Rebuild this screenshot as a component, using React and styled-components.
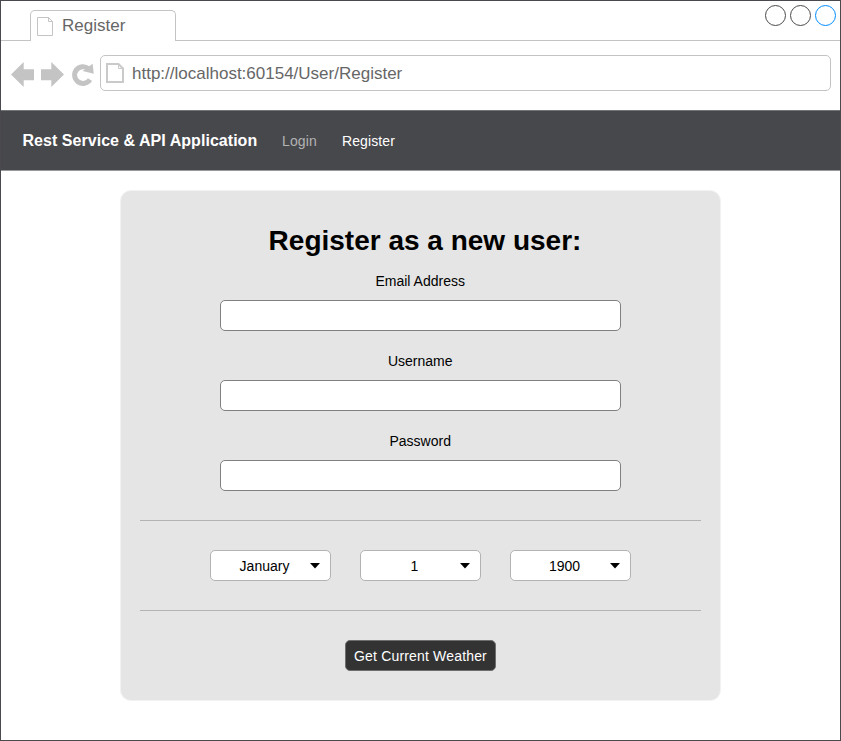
import React from "react";
import styled, { createGlobalStyle } from "styled-components";

const GlobalStyle = createGlobalStyle`
  *, *::before, *::after { box-sizing: border-box; }
  body {
    margin: 0;
    background: #fff;
    font-family: "Liberation Sans", Arial, Helvetica, sans-serif;
  }
`;

const Window = styled.div`
  display: flex;
  flex-direction: column;
  width: 841px;
  height: 741px;
  border: 1px solid #4a4a4e;
  background: #fff;
`;

const TabStrip = styled.div`
  display: flex;
  align-items: flex-end;
  height: 40px;
`;

const TabGap = styled.div`
  width: 29px;
  height: 40px;
  border-bottom: 1px solid #c4c4c4;
`;

const Tab = styled.div`
  display: flex;
  align-items: center;
  gap: 8px;
  width: 146px;
  height: 31px;
  padding: 0 0 0 6px;
  border: 1px solid #c4c4c4;
  border-bottom: none;
  border-radius: 5px 5px 0 0;
`;

const TabTitle = styled.span`
  font-size: 17px;
  line-height: 20px;
  color: #666;
`;

const WindowControls = styled.div`
  display: flex;
  flex: 1;
  justify-content: flex-end;
  height: 40px;
  padding: 4px 4px 0 0;
  gap: 4px;
  border-bottom: 1px solid #c4c4c4;
`;

const ControlDot = styled.span`
  width: 21px;
  height: 21px;
  border: 1px solid ${(p) => (p.$accent ? "#008cff" : "#4a4a4a")};
  border-radius: 50%;
`;

const Toolbar = styled.div`
  display: flex;
  align-items: flex-start;
  height: 69px;
  padding: 14px 9px 0 10px;
`;

const NavIcons = styled.svg`
  flex: none;
  width: 83px;
  height: 36px;
  margin-right: 6px;
`;

const AddressBar = styled.div`
  display: flex;
  flex: 1;
  align-items: center;
  gap: 8px;
  height: 36px;
  padding-left: 5px;
  border: 1px solid #c4c4c4;
  border-radius: 5px;
`;

const Url = styled.span`
  padding-top: 2px;
  font-size: 17px;
  line-height: 20px;
  color: #666;
`;

const Navbar = styled.nav`
  display: flex;
  align-items: center;
  height: 61px;
  padding: 0 0 0 21.5px;
  background: #47484c;
  border-top: 1px solid #737476;
  border-bottom: 1px solid #98989c;
`;

const Brand = styled.span`
  width: 259.5px;
  font-size: 16px;
  font-weight: 700;
  letter-spacing: 0.04px;
  color: #fff;
`;

const NavLink = styled.a`
  margin-right: 25px;
  padding-top: 1px;
  font-size: 14px;
  letter-spacing: 0.13px;
  color: ${(p) => (p.$active ? "#fff" : "#b3b3b3")};
`;

const Card = styled.form`
  display: flex;
  flex-direction: column;
  align-items: center;
  align-self: center;
  width: 601px;
  height: 511px;
  margin-top: 19px;
  padding: 30px 19px 0;
  border: 1px solid #f2f2f2;
  border-radius: 11px;
  background: #e5e5e5;
`;

const Heading = styled.h1`
  margin: 0 0 0 9px;
  height: 49px;
  font-size: 28px;
  line-height: 40px;
  font-weight: 700;
  color: #000;
  white-space: nowrap;
`;

const Field = styled.label`
  display: flex;
  flex-direction: column;
  align-items: center;
  height: 80px;
  font-size: 14px;
  line-height: 22px;
  color: #000;
`;

const FieldLabel = styled.span`
  margin-right: 0.6px;
`;

const Input = styled.input`
  width: 401px;
  height: 31px;
  margin-top: 8px;
  padding: 0 8px;
  border: 1px solid #808080;
  border-radius: 5px;
  background: #fff;
  outline: none;
`;

const Divider = styled.hr`
  width: 561px;
  height: 1px;
  margin: 0;
  border: none;
  background: #b3b3b3;
`;

const BirthDate = styled.section`
  display: flex;
  flex-direction: column;
  margin-top: 10px;
`;

const DateRow = styled.div`
  display: flex;
  justify-content: center;
  gap: 29px;
  margin: 29px 0;
`;

const Select = styled.div`
  display: grid;
  grid-template-columns: 1fr 30px;
  align-items: center;
  width: 121px;
  height: 31px;
  border: 1px solid #b3b3b3;
  border-radius: 5px;
  background: #fff;
  font-size: 14px;
  line-height: 16px;
  color: #000;
`;

const SelectValue = styled.span`
  padding: 1px 0 0 18px;
  text-align: center;
`;

const Caret = styled.svg`
  width: 10px;
  height: 6px;
  margin-left: 10px;
`;

const SubmitButton = styled.button`
  width: 151px;
  height: 31px;
  margin-top: 29px;
  padding: 1px 0 0;
  border: 1px solid #6e6e6e;
  border-radius: 5px;
  background: #333;
  font-family: inherit;
  font-size: 14px;
  letter-spacing: 0.17px;
  color: #fff;
  white-space: nowrap;
`;

const PageIcon = ({ bold }) => (
  <svg width={bold ? 18 : 17} height={bold ? 20 : 19} viewBox={bold ? "0 0 18 20" : "0 0 17 19"} fill="none" stroke={bold ? "#cacaca" : "#c4c4c4"}>
    {bold ? (
      <>
        <path d="M1 1H12.5L17 5.5V19H1Z" strokeWidth="2" />
        <path d="M12.5 1V5.5H17" strokeWidth="1" />
      </>
    ) : (
      <path d="M.5 .5H11.5L15.5 4.5V18.5H.5ZM11.5 .5V4.5H15.5" />
    )}
  </svg>
);

const fields = [
  { label: "Email Address", type: "email" },
  { label: "Username", type: "text" },
  { label: "Password", type: "password" },
];

export default function App() {
  return (
    <>
      <GlobalStyle />
      <Window>
        <TabStrip>
          <TabGap />
          <Tab>
            <PageIcon />
            <TabTitle>Register</TabTitle>
          </Tab>
          <WindowControls>
            <ControlDot />
            <ControlDot />
            <ControlDot $accent />
          </WindowControls>
        </TabStrip>
        <Toolbar>
          <NavIcons viewBox="11 55 83 36">
            <path d="M11 74.5L23.7 62V69.2H34V80.2H23.7V87Z" fill="#c4c4c4" />
            <path d="M64 74.5L51.3 62V69.2H41V80.2H51.3V87Z" fill="#c4c4c4" />
            <path d="M88.4 68.6A8.4 8.4 0 1 0 90 79.7" fill="none" stroke="#c4c4c4" strokeWidth="5" />
            <path d="M92.6 63.8L93.8 73.8L82.6 71Z" fill="#c4c4c4" />
          </NavIcons>
          <AddressBar>
            <PageIcon bold />
            <Url>http://localhost:60154/User/Register</Url>
          </AddressBar>
        </Toolbar>
        <Navbar>
          <Brand>Rest Service &amp; API Application</Brand>
          <NavLink>Login</NavLink>
          <NavLink $active>Register</NavLink>
        </Navbar>
        <Card>
          <Heading>Register as a new user:</Heading>
          {fields.map((field) => (
            <Field key={field.label}>
              <FieldLabel>{field.label}</FieldLabel>
              <Input type={field.type} />
            </Field>
          ))}
          <BirthDate>
            <Divider />
            <DateRow>
              {["January", "1", "1900"].map((value) => (
                <Select key={value}>
                  <SelectValue>{value}</SelectValue>
                  <Caret viewBox="0 0 10 6">
                    <path d="M0 0H10L5 5.5Z" fill="#000" />
                  </Caret>
                </Select>
              ))}
            </DateRow>
            <Divider />
          </BirthDate>
          <SubmitButton type="button">Get Current Weather</SubmitButton>
        </Card>
      </Window>
    </>
  );
}
